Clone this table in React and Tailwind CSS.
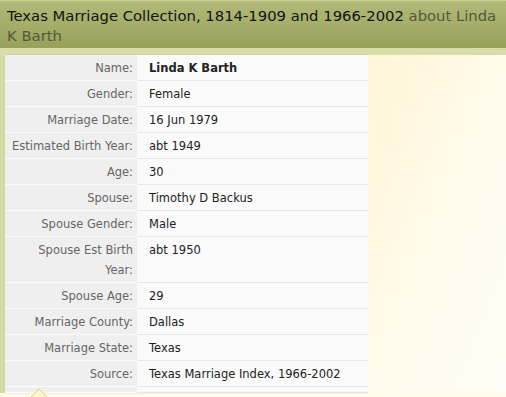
import React from "react";

const rows = [
  ["Name:", "Linda K Barth", true],
  ["Gender:", "Female"],
  ["Marriage Date:", "16 Jun 1979"],
  ["Estimated Birth Year:", "abt 1949"],
  ["Age:", "30"],
  ["Spouse:", "Timothy D Backus"],
  ["Spouse Gender:", "Male"],
  ["Spouse Est Birth Year:", "abt 1950"],
  ["Spouse Age:", "29"],
  ["Marriage County:", "Dallas"],
  ["Marriage State:", "Texas"],
  ["Source:", "Texas Marriage Index, 1966-2002"],
  ["", ""],
];

const App = () => {
  return (
    <div className="w-[506px] h-[397px] overflow-hidden relative bg-[#fffaea] font-['DejaVu_Sans',sans-serif]">
      {/* Header */}
      <div className="h-[48px] border-t border-[#c9cf98] bg-gradient-to-b from-[#b3ba7a] to-[#98a15a] pl-[7px] pt-[5px] text-[14.8px] leading-[20px] text-[#141410]">
        Texas Marriage Collection, 1814-1909 and 1966-2002{" "}
        <span className="text-[#55583a]">about Linda K Barth</span>
      </div>
      <div className="h-[7px] bg-[#d8dea9]" />

      <div className="flex">
        <div className="w-[5px] bg-[#d5dca2] self-stretch" />
        <div className="w-[363px] shrink-0 shadow-[1px_0_2px_rgba(0,0,0,0.12)]">
          {rows.map(([label, value, bold], i) => (
            <div key={i} className="flex text-[11.5px] leading-[20px]">
              <div className="w-[132px] shrink-0 bg-[#efefef] border-b border-[#fbfbfb] text-right text-[#666666] pr-[4px] pt-[3px] pb-[2px] pl-[3px]">
                {label}
              </div>
              <div
                className={`flex-1 bg-[#fafafa] border-b border-[#e6e6e6] pl-[12px] pt-[3px] pb-[2px] text-[#222222] ${
                  bold ? "font-bold" : ""
                }`}
              >
                {value}
              </div>
            </div>
          ))}
        </div>
        <div className="flex-1 bg-gradient-to-br from-[#fff6d6] via-[#fffaea] to-[#fffdf7]" />
      </div>

      {/* tooltip tip */}
      <svg className="absolute left-[27px] top-[387px]" width="24" height="14" viewBox="0 0 24 14">
        <path d="M1 13 L12 2 L23 13" fill="#fff7c4" stroke="#d9c98c" strokeWidth="1" />
      </svg>
    </div>
  );
};

export default App;
